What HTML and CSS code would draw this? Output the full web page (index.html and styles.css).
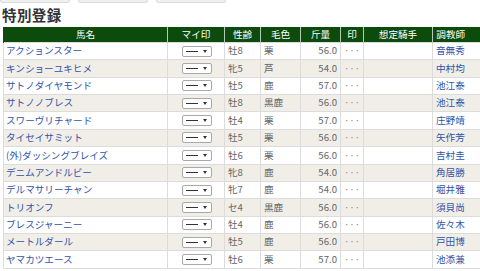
FILE: index.html
```html
<!DOCTYPE html>
<html lang="ja">
<head>
<meta charset="utf-8">
<link rel="stylesheet" href="styles.css">
</head>
<body>
<div class="tabs"><span class="tab"></span><span class="tab"></span><span class="tab"></span></div>
<h2 class="title">特別登録</h2>
<table class="entries">
  <colgroup>
    <col class="c-name"><col class="c-mark"><col class="c-sex"><col class="c-coat"><col class="c-wt"><col class="c-in"><col class="c-jockey"><col class="c-trainer">
  </colgroup>
  <thead>
    <tr><th>馬名</th><th>マイ印</th><th>性齢</th><th>毛色</th><th>斤量</th><th>印</th><th>想定騎手</th><th class="th-trainer">調教師</th></tr>
  </thead>
  <tbody>
    <tr><td class="name"><a>アクションスター</a></td><td class="mark"><span class="sel"><i class="dash"></i><i class="tri"></i></span></td><td>牡8</td><td>栗</td><td class="wt">56.0</td><td class="in">···</td><td></td><td class="trainer"><a>音無秀</a></td></tr>
    <tr><td class="name"><a>キンショーユキヒメ</a></td><td class="mark"><span class="sel"><i class="dash"></i><i class="tri"></i></span></td><td>牝5</td><td>芦</td><td class="wt">54.0</td><td class="in">···</td><td></td><td class="trainer"><a>中村均</a></td></tr>
    <tr><td class="name"><a>サトノダイヤモンド</a></td><td class="mark"><span class="sel"><i class="dash"></i><i class="tri"></i></span></td><td>牡5</td><td>鹿</td><td class="wt">57.0</td><td class="in">···</td><td></td><td class="trainer"><a>池江泰</a></td></tr>
    <tr><td class="name"><a>サトノノブレス</a></td><td class="mark"><span class="sel"><i class="dash"></i><i class="tri"></i></span></td><td>牡8</td><td>黒鹿</td><td class="wt">56.0</td><td class="in">···</td><td></td><td class="trainer"><a>池江泰</a></td></tr>
    <tr><td class="name"><a>スワーヴリチャード</a></td><td class="mark"><span class="sel"><i class="dash"></i><i class="tri"></i></span></td><td>牡4</td><td>栗</td><td class="wt">57.0</td><td class="in">···</td><td></td><td class="trainer"><a>庄野靖</a></td></tr>
    <tr><td class="name"><a>タイセイサミット</a></td><td class="mark"><span class="sel"><i class="dash"></i><i class="tri"></i></span></td><td>牡5</td><td>栗</td><td class="wt">56.0</td><td class="in">···</td><td></td><td class="trainer"><a>矢作芳</a></td></tr>
    <tr><td class="name"><a>(外)ダッシングブレイズ</a></td><td class="mark"><span class="sel"><i class="dash"></i><i class="tri"></i></span></td><td>牡6</td><td>栗</td><td class="wt">56.0</td><td class="in">···</td><td></td><td class="trainer"><a>吉村圭</a></td></tr>
    <tr><td class="name"><a>デニムアンドルビー</a></td><td class="mark"><span class="sel"><i class="dash"></i><i class="tri"></i></span></td><td>牝8</td><td>鹿</td><td class="wt">54.0</td><td class="in">···</td><td></td><td class="trainer"><a>角居勝</a></td></tr>
    <tr><td class="name"><a>デルマサリーチャン</a></td><td class="mark"><span class="sel"><i class="dash"></i><i class="tri"></i></span></td><td>牝7</td><td>鹿</td><td class="wt">54.0</td><td class="in">···</td><td></td><td class="trainer"><a>堀井雅</a></td></tr>
    <tr><td class="name"><a>トリオンフ</a></td><td class="mark"><span class="sel"><i class="dash"></i><i class="tri"></i></span></td><td>セ4</td><td>黒鹿</td><td class="wt">56.0</td><td class="in">···</td><td></td><td class="trainer"><a>須貝尚</a></td></tr>
    <tr><td class="name"><a>ブレスジャーニー</a></td><td class="mark"><span class="sel"><i class="dash"></i><i class="tri"></i></span></td><td>牡4</td><td>鹿</td><td class="wt">56.0</td><td class="in">···</td><td></td><td class="trainer"><a>佐々木</a></td></tr>
    <tr><td class="name"><a>メートルダール</a></td><td class="mark"><span class="sel"><i class="dash"></i><i class="tri"></i></span></td><td>牡5</td><td>鹿</td><td class="wt">56.0</td><td class="in">···</td><td></td><td class="trainer"><a>戸田博</a></td></tr>
    <tr><td class="name"><a>ヤマカツエース</a></td><td class="mark"><span class="sel"><i class="dash"></i><i class="tri"></i></span></td><td>牡6</td><td>栗</td><td class="wt">57.0</td><td class="in">···</td><td></td><td class="trainer"><a>池添兼</a></td></tr>
  </tbody>
</table>
</body>
</html>
```
FILE: styles.css
```css
html, body {
  margin: 0;
  padding: 0;
  background: #fff;
  overflow: hidden;
}
body {
  width: 480px;
  height: 271px;
  font-family: "Noto Sans CJK JP", "Noto Sans", sans-serif;
  color: #666;
}
.tabs {
  display: flex;
  gap: 8px;
  height: 3px;
  overflow: hidden;
}
.tab {
  width: 70px;
  height: 3px;
  background: #f0f0f0;
  border: 1px solid #dadada;
  border-top: none;
  border-radius: 0 0 3px 3px;
  box-sizing: border-box;
}
.title {
  margin: 3px 0 3px 2px;
  font-size: 14.5px;
  line-height: 18px;
  height: 18px;
  font-weight: bold;
  color: #333;
  letter-spacing: 0.4px;
}
.entries {
  margin-left: 3px;
  width: 477px;
  table-layout: fixed;
  border-collapse: collapse;
  font-size: 9.6px;
  line-height: 1;
}
.c-name { width: 164px; }
.c-mark { width: 57px; }
.c-sex { width: 36px; }
.c-coat { width: 40px; }
.c-wt { width: 40px; }
.c-in { width: 23px; }
.c-jockey { width: 69px; }
.c-trainer { width: 48px; }
.entries thead tr {
  height: 15.5px;
}
.entries th {
  background: #0c4b0c;
  color: #fff;
  font-weight: normal;
  text-align: center;
  padding: 0;
  border-left: 1px solid #b9c9b9;
  white-space: nowrap;
}
.entries th:first-child {
  border-left: 1px solid #0c4b0c;
}
.entries th.th-trainer {
  padding-right: 12px;
}
.entries tbody tr {
  height: 17.36px;
}
.entries tbody tr:nth-child(even) td {
  background: #f1eee8;
}
.entries td {
  border: 1px solid #dcdcdc;
  padding: 0 3px;
  white-space: nowrap;
  overflow: hidden;
  vertical-align: middle;
}
.entries a {
  color: #2f54a8;
  text-decoration: none;
}
.entries td.name {
  padding-left: 2px;
}
.entries td.mark {
  text-align: center;
  padding: 0 0 0 2px;
}
.entries td.wt {
  text-align: right;
  padding-right: 3px;
}
.entries td.in {
  text-align: center;
  color: #888;
  padding: 0;
}
.sel {
  display: inline-flex;
  align-items: center;
  justify-content: space-between;
  box-sizing: border-box;
  width: 30px;
  height: 11px;
  padding: 0 4px 0 3px;
  border: 1px solid #a8a8a8;
  border-radius: 2px;
  background: #fff;
  vertical-align: middle;
}
.dash {
  display: block;
  width: 12px;
  height: 0;
  border-top: 1px solid #333;
}
.tri {
  display: block;
  width: 0;
  height: 0;
  border-left: 2px solid transparent;
  border-right: 2px solid transparent;
  border-top: 3px solid #333;
}
```
